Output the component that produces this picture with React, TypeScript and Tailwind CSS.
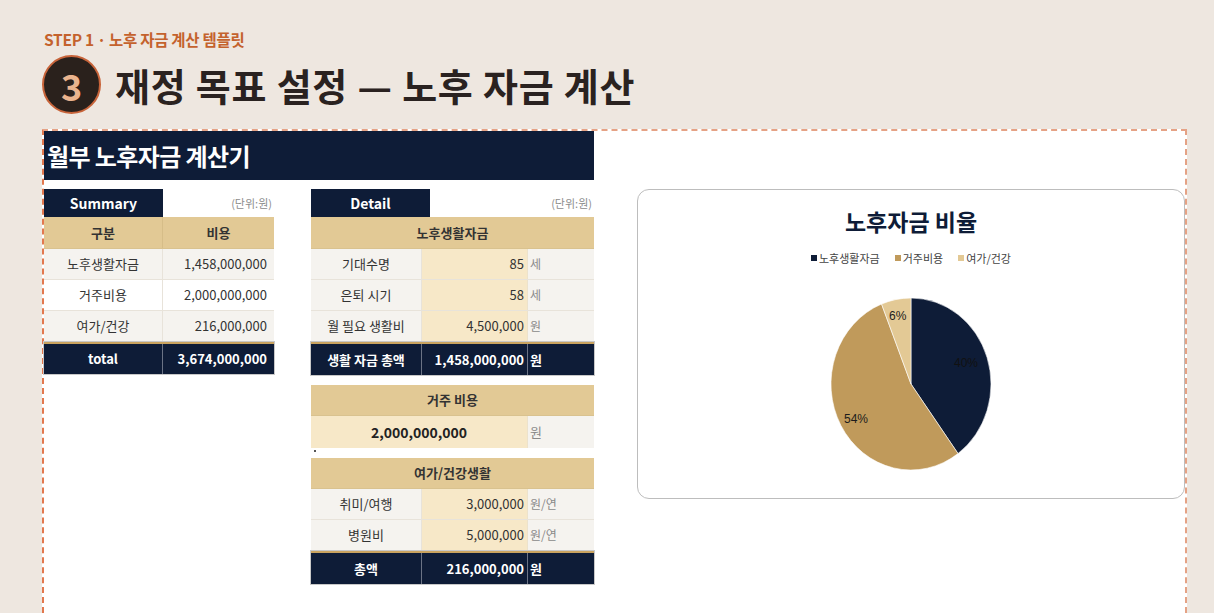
import clsx from 'clsx'

interface SummaryRow {
  label: string
  value: string
  shaded: boolean
}

interface DetailRow {
  label: string
  value: string
  unit: string
}

const SUMMARY_ROWS: SummaryRow[] = [
  { label: '노후생활자금', value: '1,458,000,000', shaded: true },
  { label: '거주비용', value: '2,000,000,000', shaded: false },
  { label: '여가/건강', value: '216,000,000', shaded: true },
]

const LIVING_ROWS: DetailRow[] = [
  { label: '기대수명', value: '85', unit: '세' },
  { label: '은퇴 시기', value: '58', unit: '세' },
  { label: '월 필요 생활비', value: '4,500,000', unit: '원' },
]

const LEISURE_ROWS: DetailRow[] = [
  { label: '취미/여행', value: '3,000,000', unit: '원/연' },
  { label: '병원비', value: '5,000,000', unit: '원/연' },
]

const SLICES = [
  { from: 0, to: 0.4, color: '#0e1c37' },
  { from: 0.4, to: 0.94, color: '#c09a5b' },
  { from: 0.94, to: 1, color: '#e3c995' },
]

function slicePath(from: number, to: number) {
  const a0 = from * Math.PI * 2
  const a1 = to * Math.PI * 2
  const x0 = Math.sin(a0)
  const y0 = -Math.cos(a0)
  const x1 = Math.sin(a1)
  const y1 = -Math.cos(a1)
  const large = to - from > 0.5 ? 1 : 0
  return `M0 0 L${x0} ${y0} A1 1 0 ${large} 1 ${x1} ${y1} Z`
}

function UnitLabel() {
  return (
    <div className="flex-1 self-center pr-[2px] text-right text-[11px] text-[#8d8d8d]">
      (단위:원)
    </div>
  )
}

function TableTab({ title }: { title: string }) {
  return (
    <div className="flex h-[28px] w-[119px] shrink-0 items-center justify-center bg-[#0e1c37] text-[14px] font-bold text-white">
      {title}
    </div>
  )
}

function SectionHead({ title }: { title: string }) {
  return (
    <div className="flex h-[31px] items-center justify-center border-b border-[#d9c28f] bg-[#e2c995] text-[13px] font-bold text-[#333]">
      {title}
    </div>
  )
}

function DetailLine({ row }: { row: DetailRow }) {
  return (
    <div className="grid h-[31px] grid-cols-[111px_106px_66px] border-b border-[#e8e3da] text-[13px] text-[#333]">
      <div className="flex items-center justify-center border-r border-[#e8e3da] bg-[#f5f3ef]">
        {row.label}
      </div>
      <div className="flex items-center justify-end border-r border-[#ece2cc] bg-[#f7e8c8] pr-[3px]">
        {row.value}
      </div>
      <div className="flex items-center bg-[#f5f3ef] pl-[2px] text-[12px] text-[#8a8a8a]">
        {row.unit}
      </div>
    </div>
  )
}

function TotalLine({ label, value }: { label: string; value: string }) {
  return (
    <div className="grid h-[33px] grid-cols-[111px_106px_66px] border-t-2 border-[#c9a35f] bg-[#0e1c37] text-[13px] font-bold text-white outline outline-1 outline-[#c8c8c8]">
      <div className="flex items-center justify-center border-r border-[#6b7385]">{label}</div>
      <div className="flex items-center justify-end border-r border-[#6b7385] pr-[3px]">
        {value}
      </div>
      <div className="flex items-center pl-[2px]">원</div>
    </div>
  )
}

function SummaryTable() {
  return (
    <div className="w-[230px] shrink-0">
      <div className="flex h-[28px]">
        <TableTab title="Summary" />
        <UnitLabel />
      </div>
      <div className="grid h-[32px] grid-cols-[119px_111px] border-b border-[#d9c28f] bg-[#e2c995] text-[13px] font-bold text-[#333]">
        <div className="flex items-center justify-center border-r border-[#d6bd88]">구분</div>
        <div className="flex items-center justify-center">비용</div>
      </div>
      {SUMMARY_ROWS.map((row) => (
        <div
          key={row.label}
          className={clsx(
            'grid h-[31px] grid-cols-[119px_111px] border-b border-[#e8e3da] text-[13px] text-[#333]',
            row.shaded ? 'bg-[#f5f3ef]' : 'bg-white',
          )}
        >
          <div className="flex items-center justify-center border-r border-[#e8e3da]">
            {row.label}
          </div>
          <div className="flex items-center justify-end pr-[7px]">{row.value}</div>
        </div>
      ))}
      <div className="grid h-[32px] grid-cols-[119px_111px] border-t-2 border-[#c9a35f] bg-[#0e1c37] text-[13px] font-bold text-white outline outline-1 outline-[#c8c8c8]">
        <div className="flex items-center justify-center border-r border-[#6b7385]">total</div>
        <div className="flex items-center justify-end pr-[7px]">3,674,000,000</div>
      </div>
    </div>
  )
}

function DetailTable() {
  return (
    <div className="ml-[37px] w-[283px] shrink-0">
      <div className="flex h-[28px]">
        <TableTab title="Detail" />
        <UnitLabel />
      </div>
      <div className="flex h-[32px] items-center justify-center border-b border-[#d9c28f] bg-[#e2c995] text-[13px] font-bold text-[#333]">
        노후생활자금
      </div>
      {LIVING_ROWS.map((row) => (
        <DetailLine key={row.label} row={row} />
      ))}
      <TotalLine label="생활 자금 총액" value="1,458,000,000" />

      {/* 거주 비용 */}
      <div className="mt-[10px]">
        <SectionHead title="거주 비용" />
        <div className="grid h-[32px] grid-cols-[217px_66px] text-[14px]">
          <div className="flex items-center justify-center border-r border-[#ece2cc] bg-[#f7e8c8] font-bold text-[#222]">
            2,000,000,000
          </div>
          <div className="flex items-center bg-[#f5f3ef] pl-[2px] text-[13px] text-[#8a8a8a]">원</div>
        </div>
        <div className="ml-[3px] mt-[2px] h-[2px] w-[2px] bg-[#555]" />
      </div>

      {/* 여가/건강생활 */}
      <div className="mt-[6px]">
        <SectionHead title="여가/건강생활" />
        {LEISURE_ROWS.map((row) => (
          <DetailLine key={row.label} row={row} />
        ))}
        <TotalLine label="총액" value="216,000,000" />
      </div>
    </div>
  )
}

function PieChart() {
  return (
    <div className="relative mx-auto mt-[32px] h-[172px] w-[160px]">
      <svg viewBox="-1 -1 2 2" preserveAspectRatio="none" className="h-full w-full">
        {SLICES.map((s) => (
          <path
            key={s.color}
            d={slicePath(s.from, s.to)}
            fill={s.color}
            stroke="#ffffff"
            strokeWidth={0.6}
            vectorEffect="non-scaling-stroke"
          />
        ))}
      </svg>
      <span className="absolute left-[123px] top-[56px] font-['Liberation_Sans',sans-serif] text-[12px] text-[#111111]">
        40%
      </span>
      <span className="absolute left-[13px] top-[112px] font-['Liberation_Sans',sans-serif] text-[12px] text-[#1c1c1c]">
        54%
      </span>
      <span className="absolute left-[58px] top-[9px] font-['Liberation_Sans',sans-serif] text-[12px] text-[#1c1c1c]">
        6%
      </span>
    </div>
  )
}

function ChartCard() {
  const legend = [
    { label: '노후생활자금', color: 'bg-[#0e1c37]' },
    { label: '거주비용', color: 'bg-[#c09a5b]' },
    { label: '여가/건강', color: 'bg-[#e3c995]' },
  ]

  return (
    <div className="ml-[43px] h-[310px] w-[548px] shrink-0 rounded-[12px] border-[1.5px] border-[#bdbdbd] bg-white">
      <h2 className="mt-[16px] text-center text-[23px] font-bold leading-[30px] text-[#0e1c37]">
        노후자금 비율
      </h2>
      <div className="mt-[14px] flex items-center justify-center gap-[15px] text-[11px] leading-[16px] text-[#444]">
        {legend.map((item) => (
          <div key={item.label} className="flex items-center gap-[2px]">
            <span className={clsx('h-[6px] w-[6px]', item.color)} />
            {item.label}
          </div>
        ))}
      </div>
      <PieChart />
    </div>
  )
}

export default function App() {
  return (
    <div className="min-h-screen bg-[#eee7e0] font-['Noto_Sans_CJK_KR','Noto_Sans',sans-serif]">
      <div className="pl-[42px] pt-[28px]">
        <p className="pl-[2px] text-[15.5px] font-bold leading-[22px] tracking-[-0.3px] text-[#c4622d]">
          STEP 1 · 노후 자금 계산 템플릿
        </p>

        <div className="mt-[5px] flex items-center gap-[14px]">
          <div className="flex h-[59px] w-[59px] items-center justify-center rounded-full border-2 border-[#c8643a] bg-[#2a211c] text-[36px] font-bold leading-none text-[#eab48e]">
            3
          </div>
          <h1 className="text-[38px] font-bold leading-[46px] tracking-[0.02em] text-[#2a2220]">
            재정 목표 설정 — 노후 자금 계산
          </h1>
        </div>

        {/* 계산기 패널 */}
        <div className="mt-[15px] h-[484px] w-[1145px] border-2 border-b-0 border-dashed border-[#e5a285] border-l-[#e2784e] bg-white">
          <div className="flex h-[49px] w-[550px] items-center bg-[#0e1c37] pl-[3px] text-[24px] font-bold tracking-[-0.6px] text-white">
            월부 노후자금 계산기
          </div>
          <div className="mt-[9px] flex items-start">
            <SummaryTable />
            <DetailTable />
            <ChartCard />
          </div>
        </div>
      </div>
    </div>
  )
}
